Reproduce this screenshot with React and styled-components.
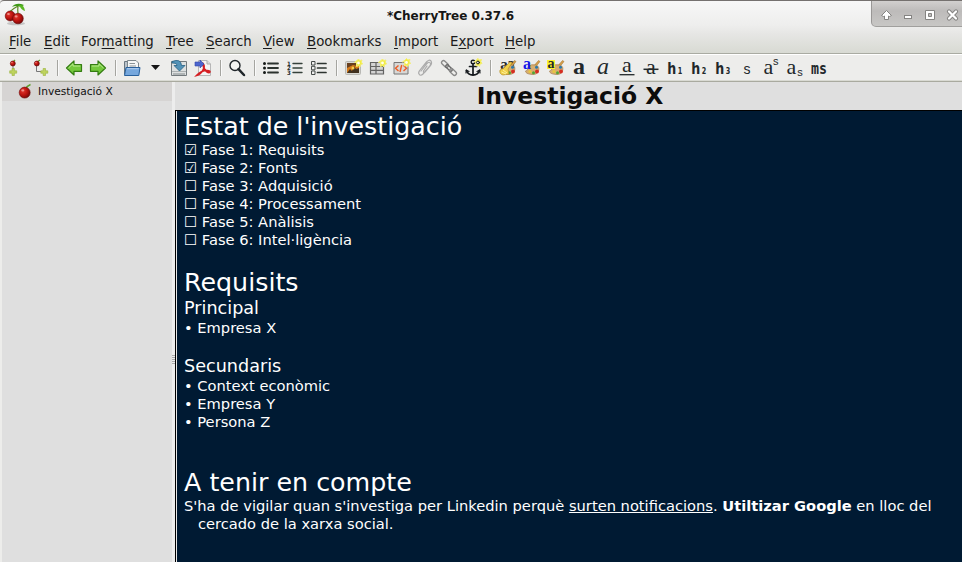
import React from "react";
import styled, { createGlobalStyle } from "styled-components";

const GlobalStyle = createGlobalStyle`
  * { box-sizing: border-box; }
  html, body { margin: 0; padding: 0; }
  body {
    width: 962px;
    height: 562px;
    overflow: hidden;
    font-family: "DejaVu Sans", sans-serif;
    color: #1a1a1a;
  }
`;

const Window = styled.div`
  width: 962px;
  height: 562px;
  display: flex;
  flex-direction: column;
  background: #ededeb;
  overflow: hidden;
`;

const Chrome = styled.header`
  height: 54px;
  flex: none;
  border-top: 1px solid #75716f;
  border-bottom: 1px solid #a9aba2;
  border-top-left-radius: 4px;
  background: linear-gradient(#f7f7f7 0, #eeeeed 24px, #e6e6e4 33px, #d8dad3 52px);
`;

const TitleBar = styled.div`
  height: 30px;
  display: grid;
  grid-template-columns: 91px 1fr 91px;
`;

const AppIcon = styled.div`
  padding: 2px 0 0 4px;
  svg { display: block; }
`;

const WindowTitle = styled.div`
  font-size: 12px;
  font-weight: bold;
  line-height: 30px;
  text-align: center;
  padding-right: 61px;
  color: #161616;
  transform: translateX(0);
`;

const WindowButtons = styled.div`
  height: 26px;
  background: linear-gradient(#d2d0cf, #bdbbba 40%, #c8c7c5);
  border-left: 1px solid #999796;
  border-bottom: 1px solid #a09f9d;
  border-bottom-left-radius: 5px;
  svg { display: block; }
`;

const MenuBar = styled.nav`
  height: 22px;
  display: flex;
  padding-left: 9px;
  font-size: 13.333px;
  line-height: 21px;
  white-space: pre;
`;

const MenuItem = styled.span`
  width: ${(p) => p.$w}px;
  flex: none;
  u { text-underline-offset: 2px; text-decoration-thickness: 1px; }
`;

const ToolBar = styled.div`
  height: 28px;
  flex: none;
  display: flex;
  align-items: center;
  padding-left: 4px;
  border-top: 1px solid #fff;
  border-bottom: 1px solid #a9aa9f;
  box-shadow: inset 0 -1px #d9dad3;
  background: #ededeb;
`;

const Tool = styled.div`
  width: ${(p) => p.$w || 24}px;
  flex: none;
  height: 24px;
  svg { display: block; overflow: visible; }
`;

const Divider = styled.div`
  width: 10px;
  flex: none;
  height: 16px;
  display: flex;
  justify-content: center;
  &::before { content: ""; width: 1px; background: #a5a5a0; box-shadow: 1px 0 #fafafa; }
`;

const Main = styled.main`
  flex: 1;
  min-height: 0;
  display: grid;
  grid-template-columns: 170px 3px 1fr;
  padding-left: 2px;
`;

const Tree = styled.aside`
  background: #dfdfdf;
`;

const TreeRow = styled.div`
  height: 19px;
  display: flex;
  align-items: center;
  padding-left: 15px;
  gap: 4px;
  font-size: 10.667px;
  color: #111;
  background: #d6d4d3;
`;

const Handle = styled.div`
  background: #ededed;
  display: flex;
  flex-direction: column;
  justify-content: center;
  padding-top: 75px;
  gap: 1px;
`;

const Grip = styled.i`
  display: block;
  height: 1px;
  background: #aaa;
`;

const Editor = styled.section`
  min-width: 0;
  display: flex;
  flex-direction: column;
`;

const NodeTitle = styled.h1`
  margin: 0;
  height: 28px;
  flex: none;
  background: #dfdfdf;
  text-align: center;
  line-height: 28px;
  font-size: 23.467px;
  color: #0c0c0c;
  padding-left: 3px;
`;

const Page = styled.article`
  flex: 1;
  border-left: 1px solid #000;
  border-top: 1px solid #000;
  background: #001a33;
  box-shadow: inset 1px 0 #e8e8e8;
  color: #fff;
  font-size: 14.667px;
  padding-left: 8px;
`;

const Heading = styled.h2`
  margin: 0;
  font-weight: normal;
  font-size: 25.344px;
  line-height: 30px;
`;

const SubHeading = styled.h3`
  margin: 0;
  font-weight: normal;
  font-size: 17.6px;
  line-height: 22px;
`;

const Line = styled.div`
  height: 18px;
  line-height: 18px;
  white-space: pre;
`;

const Paragraph = styled.p`
  margin: 0;
  line-height: 18px;
  padding-left: 14px;
  text-indent: -14px;
  padding-right: 10px;
`;

const Cherry = ({ x, y, r, id }) => (
  <g>
    <circle cx={x} cy={y} r={r} fill={`url(#${id})`} stroke="#6d0808" strokeWidth=".6" />
    <ellipse cx={x - r * 0.35} cy={y - r * 0.4} rx={r * 0.28} ry={r * 0.2} fill="#f4a6a0" opacity=".8" />
  </g>
);

const CherryGradient = ({ id }) => (
  <defs>
    <radialGradient id={id} cx=".35" cy=".35" r=".75">
      <stop offset="0" stopColor="#e2382f" />
      <stop offset=".5" stopColor="#bd1410" />
      <stop offset="1" stopColor="#690606" />
    </radialGradient>
  </defs>
);

const AppLogo = () => (
  <svg width="24" height="24">
    <CherryGradient id="logo" />
    <ellipse cx="12" cy="20.5" rx="9" ry="1.8" fill="#999" opacity=".5" />
    <path d="M5.5 9Q10 5 14 3M14 3Q13.5 7 14 11" fill="none" stroke="#5c8a24" strokeWidth="1.2" />
    <path d="M8 4Q11 0 17 1L20 2L17 4Q12 2 8 4Z" fill="#3f9a17" />
    <path d="M15 2Q20 1 21 8Q17 7 15 2Z" fill="#5ab823" />
    <Cherry x={6.2} y={13} r={5} id="logo" />
    <Cherry x={14} y={15.5} r={5.3} id="logo" />
  </svg>
);

const NodeIcon = () => (
  <svg width="17" height="17">
    <CherryGradient id="node" />
    <path d="M8.5 6Q10 3 13.5 1.5" fill="none" stroke="#5d9e28" strokeWidth="1.4" />
    <Cherry x={7.7} y={9.6} r={5.5} id="node" />
  </svg>
);

const WindowGlyphs = () => (
  <svg width="90" height="25" fill="#fff" stroke="#858482" strokeWidth="1">
    <path d="M14.5 9.5L19.5 14.5L17.5 15.5L16.5 15V18.5H12.5V15L11.5 15.5L9.5 14.5Z" />
    <rect x="32.500" y="14.5" width="7" height="3" />
    <path fillRule="evenodd" d="M53.500 9.500H62.500V18.500H53.500ZM56.500 12.500V15.500H59.500V12.500Z" />
    <g fill="none" strokeLinecap="round">
      <path d="M77 10.500L84 17.500M84 10.500L77 17.500" strokeWidth="4.200" />
      <path d="M77 10.500L84 17.500M84 10.500L77 17.500" stroke="#fff" strokeWidth="2.200" />
    </g>
  </svg>
);

const Plus = ({ x, y }) => (
  <path transform={`translate(${x} ${y})`} d="M-1.200-3.500H1.200V-1.200H3.500V1.200H1.200V3.500H-1.200V1.200H-3.500V-1.200H-1.200Z" fill="#bfd45e" stroke="#98b13a" strokeWidth=".6" />
);

const Spark = ({ x = 18, y = 7 }) => (
  <g transform={`translate(${x} ${y})`}>
    <path d="M0-4L1.300-2.500L3.500-3L2.800-1L4 1L2 1.500L1.500 4L0 2.700L-2 3.500L-2-1L-4-.5L-2-2Z" fill="#f3ec42" stroke="#f4ef72" />
    <circle r="1.400" fill="#fffff0" />
  </g>
);

const Palette = () => (
  <g>
    <path d="M19.500 4.500L21 5.500L15 13L13 12Z" fill="#d7a04b" stroke="#9d6c22" strokeWidth=".5" />
    <path d="M9 11Q12 7.500 17 9Q21 10.500 19.500 15Q18 19 13 18.500Q6.500 18 6.500 15Q9 15 9 11Z" fill="#d7ad70" stroke="#9e7746" strokeWidth=".6" />
    <circle cx="11" cy="15.500" r="1.600" fill="#e8c63e" />
    <circle cx="14.500" cy="16.800" r="1.500" fill="#52a537" />
    <circle cx="18" cy="15.500" r="1.900" fill="#d72d22" />
    <circle cx="17.500" cy="11.300" r="1.500" fill="#2b78a9" />
  </g>
);

const Arrow = ({ flip }) => (
  <g transform={flip ? "translate(24 0) scale(-1 1)" : undefined}>
    <path d="M4.500 12L12 5V8.700H19.500V15.300H12V19Z" fill="#74c93c" stroke="#347d12" strokeWidth="1.200" strokeLinejoin="round" />
    <path d="M6.500 12L11 7.700V10H18.300" fill="none" stroke="#b9ec8f" />
  </g>
);

const Bars = ({ children }) => (
  <g>
    <path d="M9 7.500H19M9 12H19M9 16.500H19" stroke="#2c332f" strokeWidth="1.800" strokeLinecap="round" />
    {children}
  </g>
);

const Letter = ({ x = 12, y = 18, size = 20, sans, ...rest }) => (
  <text
    x={x}
    y={y}
    fontSize={size}
    textAnchor="middle"
    fontFamily={sans ? '"DejaVu Sans Condensed", "DejaVu Sans", sans-serif' : '"Liberation Serif", serif'}
    fill="#22282a"
    {...rest}
  />
);

const HeadingGlyph = ({ level }) => (
  <g>
    <Letter sans x={8.800} y={18} size={15.500} fontWeight="bold" textLength="9" lengthAdjust="spacingAndGlyphs">h</Letter>
    <Letter sans x={17} y={18} size={8} fontWeight="bold" textLength="4.500" lengthAdjust="spacingAndGlyphs">{level}</Letter>
  </g>
);

const glyphs = {
  nodeAdd: (
    <g>
      <CherryGradient id="na" />
      <path d="M9 8V16" stroke="#777" />
      <path d="M9 6L11 4" stroke="#609c2b" strokeWidth="1.200" />
      <Cherry x={8.800} y={7.500} r={2.500} id="na" />
      <Plus x={9.200} y={16} />
    </g>
  ),
  subnodeAdd: (
    <g>
      <path d="M8.500 8V15.500H13" fill="none" stroke="#777" />
      <path d="M9 6L12 4" stroke="#609c2b" strokeWidth="1.200" />
      <Cherry x={8.800} y={7.500} r={2.500} id="na" />
      <Plus x={16.300} y={16} />
    </g>
  ),
  back: <Arrow />,
  forward: <Arrow flip />,
  open: (
    <g strokeLinejoin="round">
      <path d="M4.500 18V5.500H9L10 7.500V18Z" fill="#bac3cb" stroke="#697680" />
      <path d="M7.500 4.500H16L18.500 7V17H7.500Z" fill="#f5f7f7" stroke="#7d878c" />
      <path d="M9.500 7.500H15M9.500 10H16" stroke="#8b9397" />
      <path d="M6 11.500H20L18.800 19.500H4.500Z" fill="#75a7dd" stroke="#28609c" />
      <path d="M7 12.700H18.700" stroke="#b3d1f1" />
    </g>
  ),
  caret: <path d="M7 9H16L11.500 14Z" fill="#151515" />,
  save: (
    <g>
      <path d="M4.500 5.500H19.500V19.500H4.500Z" fill="#dde0e0" stroke="#72797c" />
      <path d="M5 15.500H19" stroke="#abb0b1" />
      <path d="M6.500 18H17.500" stroke="#626a6e" strokeWidth="1.500" strokeDasharray="1 1" />
      <path d="M5 5.500Q14 2 14.500 9.500H18L12.500 15L7 9.500H10Q10 7 5 7Z" fill="#5292b7" stroke="#245f83" strokeWidth=".8" />
    </g>
  ),
  pdf: (
    <g>
      <path d="M7.500 4.500H16L19.500 8V19.500H7.500Z" fill="#f4f4f4" stroke="#b7b7b7" />
      <path d="M16 4.500V8H19.500" fill="#ddd" stroke="#aaa" />
      <path d="M12 7.500Q14 10 12.500 13Q10 18.500 5.500 19.500Q10 14.500 16 14.500Q20 15 18.500 16.500Q16 17 13.500 13Q11.500 9 12 7.500Z" fill="none" stroke="#d51f23" strokeWidth="1.700" />
      <path d="M4 6H9V4L13 8L9 12V10H4Z" fill="#4c65cd" stroke="#3348a9" strokeWidth=".6" />
    </g>
  ),
  find: (
    <g fill="none" stroke="#20262a" strokeLinecap="round">
      <circle cx="10" cy="9.500" r="5" strokeWidth="1.400" fill="#f4f4f2" />
      <path d="M13.500 13.200L19 19" strokeWidth="2.500" />
    </g>
  ),
  bullets: (
    <Bars>
      <circle cx="5.500" cy="7.500" r="1.500" fill="#161a18" />
      <circle cx="5.500" cy="12" r="1.500" fill="#161a18" />
      <circle cx="5.500" cy="16.500" r="1.500" fill="#161a18" />
    </Bars>
  ),
  numbers: (
    <g>
      <path d="M10 7.500H19M10 12H19M10 16.500H19" stroke="#35413b" strokeWidth="1.400" strokeLinecap="round" />
      <Letter sans x={6} y={9.500} size={6} fontWeight="bold">1</Letter>
      <Letter sans x={6} y={14.300} size={6} fontWeight="bold">2</Letter>
      <Letter sans x={6} y={19} size={6} fontWeight="bold">3</Letter>
    </g>
  ),
  todo: (
    <g>
      <path d="M10.500 7.500H19M10.500 12H19M10.500 16.500H19" stroke="#2d3430" strokeWidth="1.700" strokeLinecap="round" />
      <path d="M4.500 5.500H8V9H4.500ZM4.500 10.300H8V13.800H4.500ZM4.500 15H8V18.500H4.500Z" fill="#eee" stroke="#454a48" />
    </g>
  ),
  image: (
    <g>
      <rect x="4.500" y="5.500" width="15" height="13" rx="1" fill="#d7d7d2" stroke="#b8b8b4" />
      <path d="M6 7H18V17H6Z" fill="#d77b18" />
      <path d="M6 7H18L16 10L12 9L6 12Z" fill="#684020" />
      <path d="M6 17L9 13L11 15L13 10L15 13L18 12V17Z" fill="#41311f" />
      <circle cx="12" cy="12" r="1.500" fill="#f7cf4e" />
      <Spark x={17.500} y={7} />
    </g>
  ),
  table: (
    <g>
      <path d="M5.500 6.500H18.500V18H5.500ZM5.500 10.500H18.500M5.500 14.300H18.500M11 6.500V18" fill="#d3d3d3" stroke="#636363" strokeWidth="1.200" />
      <Spark x={17.500} y={7} />
    </g>
  ),
  code: (
    <g>
      <path d="M5 6.500H19V18H5Z" fill="#d8d8d6" stroke="#777" />
      <path d="M9.500 9.500L6.500 12.300L9.500 15M14.500 9.500L17.500 12.300L14.500 15M12.700 9L11 16" fill="none" stroke="#ee5c23" strokeWidth="1.400" />
      <Spark x={17.500} y={6.500} />
    </g>
  ),
  attach: (
    <g fill="none" strokeLinecap="round">
      <path d="M8 15L14 7.500Q16.500 5 17.500 7.500Q18 9 16 11L10 18Q7.500 20.500 6 18Q5 16.500 7 14L13.500 6Q16 3 18 5Q19.500 7 17 10L12 16Q10 17.500 10.500 15L14 10" stroke="#aaa" strokeWidth="1.200" />
    </g>
  ),
  link: (
    <g fill="none" stroke="#888" strokeWidth="1.300">
      <rect x="-4" y="-2" width="8" height="4" rx="2" transform="translate(8 8) rotate(44)" />
      <rect x="-4" y="-1.500" width="8" height="3" rx="1.500" transform="translate(12 12) rotate(44)" stroke="#666" />
      <rect x="-4" y="-2" width="8" height="4" rx="2" transform="translate(16 16) rotate(44)" />
    </g>
  ),
  anchor: (
    <g fill="none" stroke="#15191d" strokeLinecap="round" strokeLinejoin="round">
      <circle cx="12" cy="6" r="1.800" strokeWidth="1.400" />
      <path d="M12 8V18.500M8.500 10.500H15.500" strokeWidth="1.700" />
      <path d="M5.500 14.500Q7 19 12 19Q17 19 18.500 14.500" strokeWidth="1.800" />
      <path d="M5 17L5.200 14L8 15.500M16 15.500L18.800 14L19 17" strokeWidth="1.100" />
      <Spark x={17} y={6.500} />
    </g>
  ),
  clear: (
    <g>
      <Letter x={9} y={13} size={15} fontWeight="bold">a</Letter>
      <Letter x={16} y={12} size={15} fontWeight="bold">a</Letter>
      <Palette />
      <path d="M15 6L9 12L5 14Q4 18 8 19L14 18L13 13L17 7Z" fill="#efd04a" stroke="#ad841d" strokeWidth=".6" />
      <path d="M6.500 16L11 18M8 14L12 17" stroke="#fff09b" />
    </g>
  ),
  foreground: (
    <g>
      <Palette />
      <Letter x={8} y={12.500} size={16} fontWeight="bold" style={{ fill: "#1414e8" }}>a</Letter>
    </g>
  ),
  background: (
    <g>
      <Palette />
      <rect x="4" y="4" width="8" height="9" fill="#fbf32f" />
      <Letter x={8} y={12} size={14} fontWeight="bold">a</Letter>
    </g>
  ),
  bold: <Letter y={18} size={24} fontWeight="bold">a</Letter>,
  italic: <Letter y={18} size={24} fontStyle="italic">a</Letter>,
  underline: (
    <g>
      <Letter y={16} size={22}>a</Letter>
      <path d="M4.500 18.700H19.500" stroke="#22282a" strokeWidth="1.300" />
    </g>
  ),
  strike: (
    <g>
      <Letter y={18} size={22}>a</Letter>
      <path d="M4.500 13.300H19.500" stroke="#22282a" strokeWidth="1.500" />
    </g>
  ),
  h1: <HeadingGlyph level={1} />,
  h2: <HeadingGlyph level={2} />,
  h3: <HeadingGlyph level={3} />,
  small: <Letter sans y={18} size={14} fontFamily='"Liberation Sans", sans-serif'>s</Letter>,
  superscript: (
    <g>
      <Letter x={9.500} y={18} size={22}>a</Letter>
      <Letter x={16.800} y={9} size={11} fontFamily='"Liberation Sans", sans-serif'>s</Letter>
    </g>
  ),
  subscript: (
    <g>
      <Letter x={8.500} y={18} size={22}>a</Letter>
      <Letter x={17} y={19.500} size={11} fontFamily='"Liberation Sans", sans-serif'>s</Letter>
    </g>
  ),
  mono: <Letter y={18} size={15.500} fontWeight="bold" fontFamily='"DejaVu Sans Mono", monospace' textLength="16" lengthAdjust="spacingAndGlyphs">ms</Letter>,
};

const toolGroups = [
  ["nodeAdd", "subnodeAdd"],
  ["back", "forward"],
  ["open", "caret", "save", "pdf"],
  ["find"],
  ["bullets", "numbers", "todo"],
  ["image", "table", "code", "attach", "link", "anchor"],
  ["clear", "foreground", "background", "bold", "italic", "underline", "strike", "h1", "h2", "h3", "small", "superscript", "subscript", "mono"],
];

const menus = [
  ["", "F", "ile", 35],
  ["", "E", "dit", 37],
  ["For", "m", "atting", 85],
  ["", "T", "ree", 40],
  ["", "S", "earch", 57],
  ["", "V", "iew", 44],
  ["", "B", "ookmarks", 87],
  ["", "I", "mport", 56],
  ["E", "x", "port", 55],
  ["", "H", "elp", 40],
];

const phases = [
  [true, "Fase 1: Requisits"],
  [true, "Fase 2: Fonts"],
  [false, "Fase 3: Adquisició"],
  [false, "Fase 4: Processament"],
  [false, "Fase 5: Anàlisis"],
  [false, "Fase 6: Intel·ligència"],
];

export default function App() {
  return (
    <>
      <GlobalStyle />
      <Window>
        <Chrome>
          <TitleBar>
            <AppIcon><AppLogo /></AppIcon>
            <WindowTitle>*CherryTree 0.37.6</WindowTitle>
            <WindowButtons><WindowGlyphs /></WindowButtons>
          </TitleBar>
          <MenuBar>
            {menus.map(([before, key, after, w]) => (
              <MenuItem key={key} $w={w}>{before}<u>{key}</u>{after}</MenuItem>
            ))}
          </MenuBar>
        </Chrome>
        <ToolBar>
          {toolGroups.map((group, i) => (
            <React.Fragment key={i}>
              {i > 0 && <Divider />}
              {group.map((name) => (
                <Tool key={name} $w={name === "caret" ? 23 : 24}>
                  <svg width="24" height="24">{glyphs[name]}</svg>
                </Tool>
              ))}
            </React.Fragment>
          ))}
        </ToolBar>
        <Main>
          <Tree>
            <TreeRow><NodeIcon />Investigació X</TreeRow>
          </Tree>
          <Handle><Grip /><Grip /><Grip /><Grip /><Grip /></Handle>
          <Editor>
            <NodeTitle>Investigació X</NodeTitle>
            <Page>
              <Heading>Estat de l'investigació</Heading>
              {phases.map(([done, label]) => (
                <Line key={label}>{done ? "☑" : "☐"} {label}</Line>
              ))}
              <Line />
              <Heading>Requisits</Heading>
              <SubHeading>Principal</SubHeading>
              <Line>• Empresa X</Line>
              <Line />
              <SubHeading>Secundaris</SubHeading>
              <Line>• Context econòmic</Line>
              <Line>• Empresa Y</Line>
              <Line>• Persona Z</Line>
              <Line />
              <Line />
              <Heading>A tenir en compte</Heading>
              <Paragraph>
                S'ha de vigilar quan s'investiga per Linkedin perquè <u>surten notificacions</u>. <b>Utiltizar Google</b> en lloc del cercado de la xarxa social.
              </Paragraph>
            </Page>
          </Editor>
        </Main>
      </Window>
    </>
  );
}
